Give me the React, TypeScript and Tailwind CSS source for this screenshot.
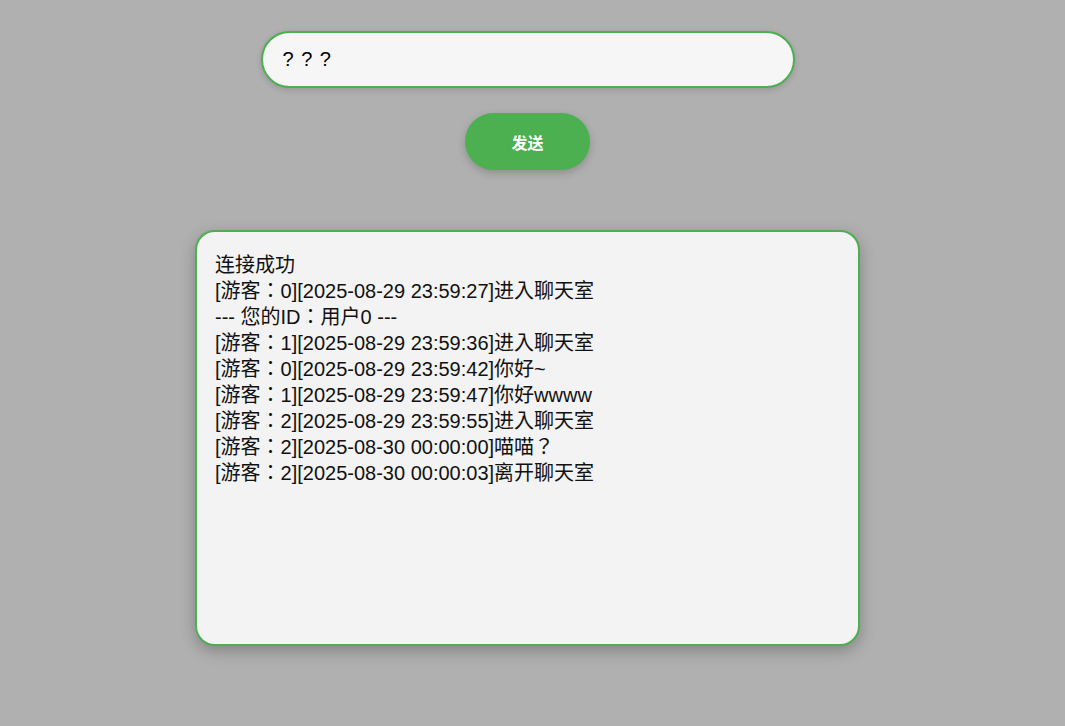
const messages = [
  '连接成功',
  '[游客：0][2025-08-29 23:59:27]进入聊天室',
  '--- 您的ID：用户0 ---',
  '[游客：1][2025-08-29 23:59:36]进入聊天室',
  '[游客：0][2025-08-29 23:59:42]你好~',
  '[游客：1][2025-08-29 23:59:47]你好wwww',
  '[游客：2][2025-08-29 23:59:55]进入聊天室',
  '[游客：2][2025-08-30 00:00:00]喵喵？',
  '[游客：2][2025-08-30 00:00:03]离开聊天室',
];

export default function App() {
  return (
    <div className="min-h-[726px] w-full bg-[#b0b0b0] flex flex-col items-center pt-[31px] pr-[10px] font-['Liberation_Sans','Noto_Sans_CJK_SC',sans-serif] text-black">
      <input
        type="text"
        defaultValue="? ? ?"
        className="w-[534px] h-[57px] rounded-full border-2 border-[#4caf50] bg-[#f6f6f6] px-[20px] text-[20px] tracking-[1px] outline-none shadow-[0_2px_6px_rgba(0,0,0,0.15)] font-['Liberation_Sans','Noto_Sans_CJK_SC',sans-serif]"
      />
      <button className="mt-[25px] w-[125px] h-[57px] rounded-full bg-[#4caf50] text-white text-[16px] font-bold shadow-[0_3px_8px_rgba(0,0,0,0.2)] font-['Noto_Sans_CJK_SC',sans-serif]">
        发送
      </button>
      {/* TC face keeps full-width ：and ？ centred in their cell, as in the screenshot */}
      <div className="mt-[60px] w-[665px] h-[416px] rounded-[20px] border-2 border-[#4caf50] bg-[#f3f3f3] px-[18px] pt-[20px] shadow-[0_5px_15px_rgba(0,0,0,0.25)] overflow-y-auto font-['Liberation_Sans','Noto_Sans_CJK_TC',sans-serif]">
        {messages.map((m, i) => (
          <div key={i} className="text-[20px] leading-[26px] text-[#111] whitespace-nowrap">
            {m}
          </div>
        ))}
      </div>
    </div>
  );
}
